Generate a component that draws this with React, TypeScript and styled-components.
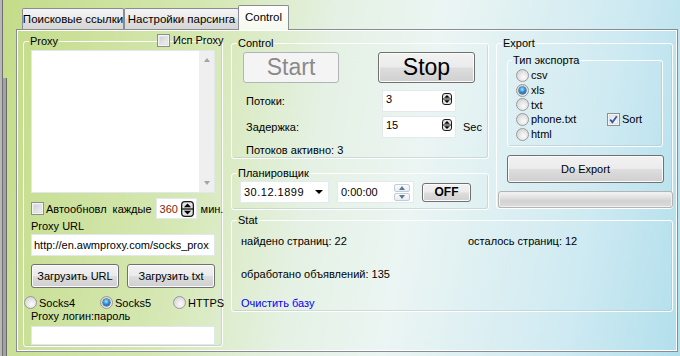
import React from 'react';
import styled, { createGlobalStyle, css } from 'styled-components';

const GlobalStyle = createGlobalStyle`
  html, body {
    margin: 0;
    padding: 0;
  }
  body {
    font-family: "Liberation Sans", Arial, sans-serif;
    font-size: 11px;
    color: #000;
  }
  * {
    box-sizing: border-box;
  }
`;

const SpinGlyph = ({ w = 10, h = 12 }: { w?: number; h?: number }) => (
  <svg width={w} height={h} viewBox="0 0 10 12" preserveAspectRatio="none">
    <rect x="0.5" y="0.5" width="9" height="11" rx="2.5" fill="#e4e4e4" stroke="#1a1a1a" />
    <line x1="0.5" y1="6" x2="9.5" y2="6" stroke="#1a1a1a" />
    <path d="M2.2 4.7 L5 1.9 L7.8 4.7 Z" fill="#000" />
    <path d="M2.2 7.3 L5 10.1 L7.8 7.3 Z" fill="#000" />
  </svg>
);

const CheckMark = () => (
  <svg width="9" height="9" viewBox="0 0 9 9">
    <path d="M1.2 4.6 L3.4 7.2 L7.8 1.2" fill="none" stroke="#3556a8" strokeWidth="1.8" />
  </svg>
);

export default function App() {
  return (
    <>
      <GlobalStyle />
      <Page>
        <Strip>
          <StripCap />
          <StripBar />
        </Strip>
        <Main>
          <TabRow>
            <Tab $w={102}>Поисковые ссылки</Tab>
            <Tab $w={115}>Настройки парсинга</Tab>
            <Tab $w={51} $active>
              Control
            </Tab>
          </TabRow>
          <Panel>
            <Group $w={200} $h={312}>
              <Legend>
                Proxy
                <LegendCheck>
                  <CheckBox />
                  <span>Исп Proxy</span>
                </LegendCheck>
              </Legend>
              <ProxyBody>
                <Memo>
                  <ScrollTrack>
                    <Arrow $dir="up" />
                    <Arrow $dir="down" />
                  </ScrollTrack>
                </Memo>
                <AutoRow>
                  <CheckBox />
                  <span>Автообновл</span>
                  <Every>каждые</Every>
                  <SpinEdit $w={41} $h={21} $red $center>
                    <span>360</span>
                    <SpinGlyph w={13} h={16} />
                  </SpinEdit>
                  <Minutes>мин.</Minutes>
                </AutoRow>
                <FieldLabel>Proxy URL</FieldLabel>
                <TextBox $h={22}>http://en.awmproxy.com/socks_prox</TextBox>
                <ButtonRow>
                  <Button $w={88} $h={24}>Загрузить URL</Button>
                  <Button $w={88} $h={24}>Загрузить txt</Button>
                </ButtonRow>
                <ProtoRow>
                  <Choice>
                    <Radio />
                    Socks4
                  </Choice>
                  <Choice>
                    <Radio $checked />
                    Socks5
                  </Choice>
                  <Choice>
                    <Radio />
                    HTTPS
                  </Choice>
                </ProtoRow>
                <FieldLabel>Proxy логин:пароль</FieldLabel>
                <TextBox $h={19} $gap={3} />
              </ProxyBody>
            </Group>

            <RightArea>
              <Group $w={258} $h={122}>
                <Legend>Control</Legend>
                <ControlBody>
                  <BigRow>
                    <BigButton disabled>Start</BigButton>
                    <BigButton $push>Stop</BigButton>
                  </BigRow>
                  <ParamRow $gap={7}>
                    <ParamLabel>Потоки:</ParamLabel>
                    <SpinEdit $w={74} $h={22}>
                      <span>3</span>
                      <SpinGlyph />
                    </SpinEdit>
                  </ParamRow>
                  <ParamRow $gap={4}>
                    <ParamLabel>Задержка:</ParamLabel>
                    <SpinEdit $w={74} $h={22}>
                      <span>15</span>
                      <SpinGlyph />
                    </SpinEdit>
                    <span>Sec</span>
                  </ParamRow>
                  <ActiveLine>Потоков активно: 3</ActiveLine>
                </ControlBody>
              </Group>

              <ExportGroup $w={177} $h={172}>
                <Legend>Export</Legend>
                <ExportBody>
                  <Group $w={156} $h={93}>
                    <Legend $inset={4}>Тип экспорта</Legend>
                    <FormatGrid>
                      <Choice>
                        <Radio />
                        csv
                      </Choice>
                      <span />
                      <Choice>
                        <Radio $checked />
                        xls
                      </Choice>
                      <span />
                      <Choice>
                        <Radio />
                        txt
                      </Choice>
                      <span />
                      <Choice>
                        <Radio />
                        phone.txt
                      </Choice>
                      <Choice>
                        <CheckBox $checked>
                          <CheckMark />
                        </CheckBox>
                        Sort
                      </Choice>
                      <Choice>
                        <Radio />
                        html
                      </Choice>
                    </FormatGrid>
                  </Group>
                  <Button $w={157} $h={28} $gap={8}>
                    Do Export
                  </Button>
                  <Progress />
                </ExportBody>
              </ExportGroup>

              <Group $w={258} $h={43} $gap={8}>
                <Legend>Планировщик</Legend>
                <ScheduleRow>
                  <PickerBox $w={89}>
                    <DateText>30.12.1899</DateText>
                    <DropArrow />
                  </PickerBox>
                  <PickerBox $w={77}>
                    <span>0:00:00</span>
                    <TimeSpin>
                      <TimeBtn>
                        <Arrow $dir="up" $tone="#5d7896" />
                      </TimeBtn>
                      <TimeBtn>
                        <Arrow $dir="down" $tone="#5d7896" />
                      </TimeBtn>
                    </TimeSpin>
                  </PickerBox>
                  <OffButton $w={49} $h={19}>
                    OFF
                  </OffButton>
                </ScheduleRow>
              </Group>

              <StatGroup $w={442} $h={98} $gap={4}>
                <Legend>Stat</Legend>
                <StatBody>
                  <span>найдено страниц: 22</span>
                  <span>осталось страниц: 12</span>
                  <StatWide $gap={20}>обработано объявлений: 135</StatWide>
                  <StatLink $gap={16}>Очистить базу</StatLink>
                </StatBody>
              </StatGroup>
            </RightArea>
          </Panel>
        </Main>
      </Page>
    </>
  );
}

const Page = styled.div`
  width: 680px;
  height: 356px;
  overflow: hidden;
  display: flex;
  background: linear-gradient(
    100deg,
    #c3dc88 0%,
    #d5e7b2 28%,
    #e5f1e4 46%,
    #ebf5f3 60%,
    #cfeaf2 84%,
    #b1dfec 100%
  );
`;

const Strip = styled.div`
  width: 7px;
  flex: none;
  display: flex;
  flex-direction: column;
`;

const StripCap = styled.div`
  width: 3px;
  height: 78px;
  background: #b7b7b7;
  border-right: 1px solid #6e6e6e;
`;

const StripBar = styled.div`
  flex: 1;
  background: linear-gradient(
    90deg,
    #b8b8b8 0,
    #b8b8b8 2px,
    #707070 2px,
    #707070 3px,
    #a2a2a2 3px,
    #a2a2a2 6px,
    #6a6a6a 6px
  );
`;

const Main = styled.div`
  flex: 1;
  min-width: 0;
  display: flex;
  flex-direction: column;
  padding: 5px 2px 4px 9px;
`;

const TabRow = styled.div`
  display: flex;
  align-items: flex-end;
  height: 25px;
  margin-bottom: -1px;
  padding-left: 6px;
  position: relative;
  z-index: 1;
`;

const Tab = styled.div<{ $w: number; $active?: boolean }>`
  width: ${(p) => p.$w}px;
  height: 21px;
  margin-bottom: 1px;
  display: flex;
  align-items: center;
  justify-content: center;
  font-size: 11.5px;
  white-space: nowrap;
  border: 1px solid #898c95;
  border-bottom: none;
  border-radius: 2px 2px 0 0;
  background: linear-gradient(#f3f3f3, #ececec 45%, #dfdfdf 55%, #d6d6d6);

  ${(p) =>
    p.$active &&
    css`
      height: 25px;
      margin-bottom: 0;
      margin-left: -1px;
      padding-bottom: 3px;
      background: linear-gradient(#ffffff, #f5f9ee);
    `}
`;

const Panel = styled.div`
  flex: 1;
  display: flex;
  align-items: flex-start;
  gap: 8px;
  padding: 5px 4px 0 6px;
  border: 1px solid #898c95;
  box-shadow: inset 1px 1px 0 #fff, inset -1px -1px 0 #fff;
`;

const Group = styled.fieldset<{ $w: number; $h: number; $gap?: number }>`
  width: ${(p) => p.$w}px;
  height: ${(p) => p.$h}px;
  margin: ${(p) => p.$gap || 0}px 0 0 0;
  padding: 0;
  min-width: 0;
  border: 1px solid #ffffff;
  border-radius: 3px;
  box-shadow: inset -1px -1px 0 rgba(170, 188, 196, 0.45);
`;

const ExportGroup = styled(Group)`
  grid-column: 2;
  grid-row: 1 / span 2;
`;

const StatGroup = styled(Group)`
  grid-column: 1 / span 2;
`;

const Legend = styled.legend<{ $inset?: number }>`
  margin-left: ${(p) => p.$inset ?? 5}px;
  padding: 0 1px;
  line-height: 13px;
  white-space: nowrap;
  position: relative;
`;

const LegendCheck = styled.span`
  position: absolute;
  left: 128px;
  top: -1px;
  display: flex;
  align-items: center;
  gap: 3px;
  white-space: nowrap;
`;

const CheckBox = styled.span<{ $checked?: boolean }>`
  width: 13px;
  height: 13px;
  flex: none;
  display: inline-flex;
  align-items: center;
  justify-content: center;
  border: 1px solid #8e8f8f;
  background: linear-gradient(135deg, #c6cacf, #f6f6f6);
  box-shadow: inset 0 0 0 1px #f4f4f4, inset 0 0 0 2px #e0e2e4;

  ${(p) =>
    p.$checked &&
    css`
      background: linear-gradient(135deg, #dde3ee, #fbfcfd);
    `}
`;

const Radio = styled.span<{ $checked?: boolean }>`
  width: 13px;
  height: 13px;
  flex: none;
  border-radius: 50%;
  border: 1px solid #9a9a9a;
  background: radial-gradient(circle at 60% 65%, #fbfbfb 0%, #e6e6e6 45%, #c9c9c9 100%);
  position: relative;

  ${(p) =>
    p.$checked &&
    css`
      &::after {
        content: '';
        position: absolute;
        inset: 2px;
        border-radius: 50%;
        background: radial-gradient(circle at 45% 35%, #a9e8ff 0%, #2e92dc 45%, #0b3f7c 100%);
        box-shadow: 0 0 0 0.5px #16385c;
      }
    `}
`;

const Choice = styled.label`
  display: flex;
  align-items: center;
  gap: 2px;
  white-space: nowrap;
`;

const ProxyBody = styled.div`
  display: flex;
  flex-direction: column;
  padding: 2px 7px 0 7px;
`;

const Memo = styled.div`
  height: 143px;
  display: flex;
  justify-content: flex-end;
  background: #fff;
  border: 1px solid #e1e7eb;
`;

const ScrollTrack = styled.div`
  width: 15px;
  display: flex;
  flex-direction: column;
  align-items: center;
  justify-content: space-between;
  padding: 7px 0 7px;
  background: #efefef;
`;

const Arrow = styled.span<{ $dir: 'up' | 'down'; $tone?: string }>`
  width: 0;
  height: 0;
  border-left: 3.5px solid transparent;
  border-right: 3.5px solid transparent;
  ${(p) =>
    p.$dir === 'up'
      ? css`
          border-bottom: 4px solid ${p.$tone || '#a3a3a3'};
        `
      : css`
          border-top: 4px solid ${p.$tone || '#a3a3a3'};
        `}
`;

const AutoRow = styled.div`
  height: 21px;
  margin-top: 5px;
  display: flex;
  align-items: center;
  gap: 2px;
  white-space: nowrap;
`;

const Every = styled.span`
  margin-left: 4px;
  margin-right: 2px;
`;

const Minutes = styled.span`
  margin-left: 2px;
`;

const SpinEdit = styled.div<{ $w: number; $h: number; $red?: boolean; $center?: boolean }>`
  width: ${(p) => p.$w}px;
  height: ${(p) => p.$h}px;
  flex: none;
  display: flex;
  align-items: ${(p) => (p.$center ? 'center' : 'flex-start')};
  justify-content: space-between;
  padding: ${(p) => (p.$center ? '0 2px 0 3px' : '2px 3px 0 3px')};
  background: #fff;
  border: 1px solid #e3e9ef;
  color: ${(p) => (p.$red ? '#8a2206' : '#000')};
`;

const FieldLabel = styled.div`
  margin-top: 1px;
  line-height: 13px;
`;

const TextBox = styled.div<{ $h: number; $gap?: number }>`
  height: ${(p) => p.$h}px;
  margin-top: ${(p) => p.$gap ?? 1}px;
  display: flex;
  align-items: center;
  padding: 0 2px;
  white-space: nowrap;
  overflow: hidden;
  background: #fff;
  border: 1px solid #e1e7eb;
`;

const ButtonRow = styled.div`
  margin-top: 8px;
  display: flex;
  justify-content: space-between;
`;

const Button = styled.button<{ $w: number; $h: number; $gap?: number }>`
  width: ${(p) => p.$w}px;
  height: ${(p) => p.$h}px;
  margin: ${(p) => p.$gap || 0}px 0 0 0;
  padding: 0;
  font: inherit;
  color: #000;
  border: 1px solid #707070;
  border-radius: 3px;
  background: linear-gradient(#f2f2f2, #ebebeb 48%, #dddddd 52%, #cfcfcf);
  box-shadow: inset 0 0 0 1px #fbfbfb;
  flex: none;
`;

const OffButton = styled(Button)`
  font-weight: bold;
  font-size: 12px;
`;

const ProtoRow = styled.div`
  margin: 8px 0 0 -7px;
  height: 13px;
  display: grid;
  grid-template-columns: 76px 73px auto;
`;

const RightArea = styled.div`
  margin-top: 2px;
  display: grid;
  grid-template-columns: 258px 177px;
  column-gap: 7px;
  align-items: start;
`;

const ControlBody = styled.div`
  padding: 2px 0 0 11px;
  display: flex;
  flex-direction: column;
`;

const BigRow = styled.div`
  display: flex;
  gap: 39px;
`;

const BigButton = styled.button<{ $push?: boolean }>`
  width: ${(p) => (p.$push ? 97 : 96)}px;
  height: 31px;
  padding: 0;
  font-family: "Liberation Sans", Arial, sans-serif;
  font-size: 23px;
  color: #000;
  border: 1px solid #707070;
  border-radius: 3px;
  background: linear-gradient(#f2f2f2, #ebebeb 48%, #dddddd 52%, #cfcfcf);
  box-shadow: inset 0 0 0 1px #fbfbfb;

  &:disabled {
    color: #8a8a8a;
    border-color: #b2b5b8;
    background: #f4f4f4;
    box-shadow: none;
  }
`;

const ParamRow = styled.div<{ $gap: number }>`
  margin-top: ${(p) => p.$gap}px;
  display: grid;
  grid-template-columns: 132px 74px auto;
  column-gap: 7px;
  align-items: center;
`;

const ParamLabel = styled.span`
  padding-left: 3px;
`;

const ActiveLine = styled.div`
  margin-top: 6px;
  padding-left: 3px;
  line-height: 13px;
`;

const ScheduleRow = styled.div`
  padding: 1px 0 0 8px;
  display: flex;
  align-items: center;
  gap: 8px;
`;

const PickerBox = styled.div<{ $w: number }>`
  width: ${(p) => p.$w}px;
  height: 22px;
  display: flex;
  align-items: center;
  justify-content: space-between;
  padding: 0 3px 0 3px;
  background: #fff;
  border: 1px solid #e3e9ef;
`;

const DateText = styled.span`
  letter-spacing: 0.5px;
`;

const DropArrow = styled.span`
  width: 0;
  height: 0;
  margin-right: 2px;
  border-left: 4px solid transparent;
  border-right: 4px solid transparent;
  border-top: 4px solid #000;
`;

const TimeSpin = styled.div`
  display: flex;
  flex-direction: column;
  gap: 1px;
`;

const TimeBtn = styled.span`
  width: 16px;
  height: 8px;
  display: flex;
  align-items: center;
  justify-content: center;
  border: 1px solid #c3ccd6;
  border-radius: 2px;
  background: linear-gradient(#fafbfc, #e8edf2);
`;

const ExportBody = styled.div`
  padding: 4px 9px 0 10px;
  display: flex;
  flex-direction: column;
`;

const FormatGrid = styled.div`
  padding: 1px 0 0 8px;
  display: grid;
  grid-template-columns: 91px auto;
  grid-auto-rows: 14.7px;
  align-items: center;
`;

const Progress = styled.div`
  width: 175px;
  height: 17px;
  margin: 8px 0 0 -9px;
  border: 1px solid #b4b4b4;
  border-radius: 3px;
  background: linear-gradient(#f4f4f4, #e2e2e2 35%, #d2d2d2 60%, #dcdcdc);
  box-shadow: inset 0 0 0 1px #f0f0f0;
`;

const StatBody = styled.div`
  padding: 8px 0 0 9px;
  display: grid;
  grid-template-columns: 227px auto;
  line-height: 13px;
`;

const StatWide = styled.span<{ $gap: number }>`
  grid-column: 1 / span 2;
  margin-top: ${(p) => p.$gap}px;
`;

const StatLink = styled(StatWide)`
  color: #0000ff;
  cursor: pointer;
`;
